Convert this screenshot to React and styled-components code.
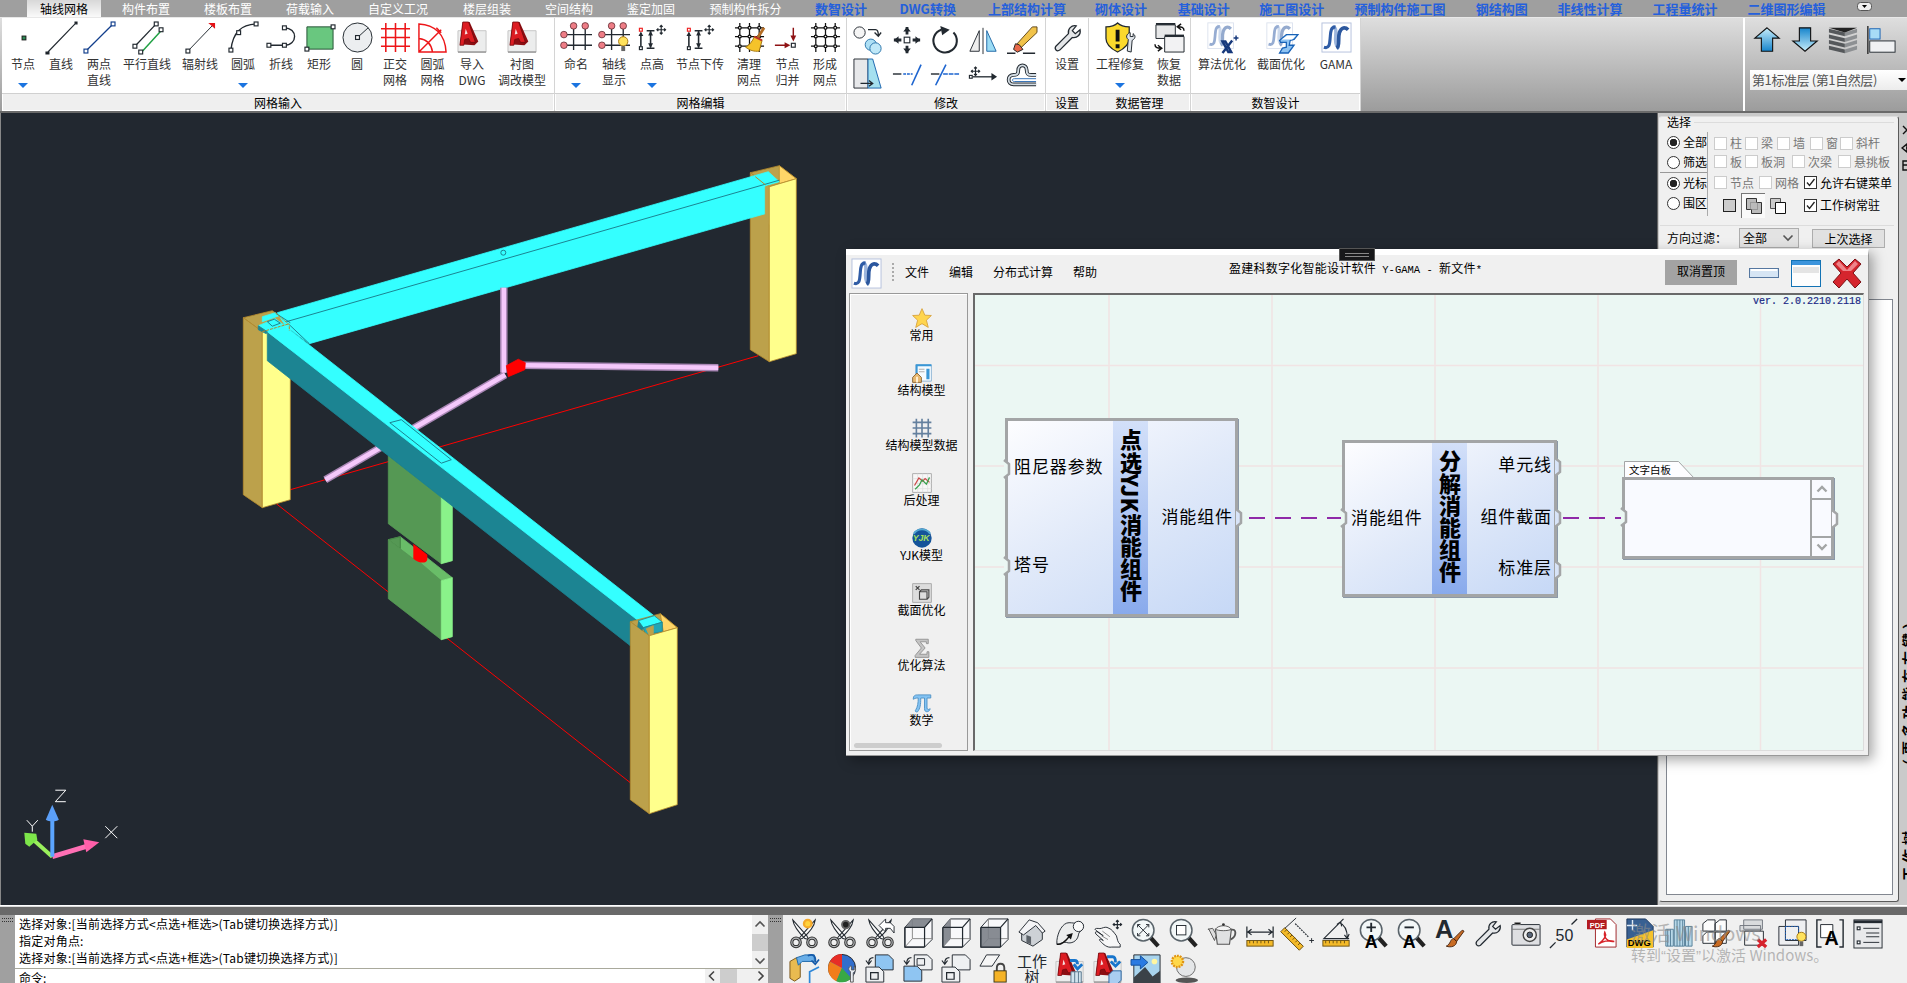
import React from "react";
import styled, { createGlobalStyle } from "styled-components";

const Global = createGlobalStyle`
  * { box-sizing: border-box; }
  body { margin: 0; overflow: hidden; }
  body, text { font-family: "Liberation Sans", "Noto Sans CJK SC", sans-serif; }
`;
const UI = '"Noto Sans CJK SC", sans-serif';

const Screen = styled.div`
  width: 1907px; height: 983px; display: flex; flex-direction: column; position: relative;
  overflow: hidden; background: #f0f0f0; font: 12px/16px ${UI}; color: #000; white-space: nowrap;
`;

/* ---------- tab bar ---------- */
const TabBar = styled.div`height: 17px; background: #9f9f9f; display: flex; padding-left: 23px; flex: none;`;
const TabCell = styled.div`
  width: ${p => p.$w}px; flex: none; display: flex; justify-content: center;
  color: ${p => (p.$blue ? "#2560dc" : "#fff")};
  font-weight: ${p => (p.$blue ? 700 : 400)}; font-size: ${p => (p.$blue ? 13 : 12)}px; line-height: 18px;
`;
const ActiveTab = styled.span`
  width: 74px; height: 17px; text-align: center; color: #000; background: linear-gradient(#d8d8d8, #fafafa);
`;
const tabs = [["轴线网格", 82], ["构件布置", 82], ["楼板布置", 82], ["荷载输入", 82], ["自定义工况", 94], ["楼层组装", 84], ["空间结构", 80], ["鉴定加固", 84], ["预制构件拆分", 105]];
const blueTabs = [["数智设计", 86], ["DWG转换", 87.4], ["上部结构计算", 111.2], ["砌体设计", 76.8], ["基础设计", 88.6], ["施工图设计", 87.4], ["预制构件施工图", 129.2], ["钢结构图", 74.2], ["非线性计算", 102.4], ["工程量统计", 87.6], ["二维图形编辑", 115.8]];

/* ---------- icons ---------- */
const K = "#222930";
const Sq = ({ x, y, c = K, s = 4, f = "#fff" }) => <rect x={x - s / 2} y={y - s / 2} width={s} height={s} fill={f} stroke={c} strokeWidth="1.2" />;
const Logo = ({ o = 1 }) => (
  <g opacity={o}>
    <rect x="1" y="1" width="30" height="30" fill="#fff" stroke="#b5c2dd" />
    <path d="M12 5c5 0 3 8 3 13s1 8 4 9" fill="none" stroke="#9db6dd" strokeWidth="3.500" />
    <path d="M3 26c6 2 6-4 6.500-10S10 5 15 5" fill="none" stroke="#2f5ca6" strokeWidth="3.200" />
    <path d="M16 27c4-2 1-10 3-16s6-6 9-3" fill="none" stroke="#2b579e" strokeWidth="3.800" />
  </g>
);
const Wrench = () => <path d="M4 25L17 12c-1-5 3-9 8-8l-4 5 3 3 5-4c1 5-3 9-8 8L8 29c-3 2-6-1-4-4z" fill="#e4e6e8" stroke={K} strokeWidth="1.300" />;
const Grid = ({ c, w = 1.5 }) => <path d="M6 1v30M16 1v30M26 1v30M1 7h30M1 16h30M1 25h30" stroke={c} strokeWidth={w} fill="none" />;
const Acad = () => (
  <>
    <path d="M1 9h29v22H1z" fill="#eceded" stroke="#c4c4c4" /><path d="M1 31h29" stroke="#777" />
    <path d="M6 0h7l9 20-4 4-15-1z" fill="#8c0d12" />
    <path d="M6 0h6l7 21h-5l-2-4-4 1-1 6H3z" fill="#dc1c22" stroke="#70090d" strokeWidth=".8" />
    <path d="M8 13l3-1-2-5z" fill="#f6dede" />
  </>
);
const Bubbles = () => (<><path d="M13 7v22M25 7v22M3 13h29M3 24h29" stroke={K} strokeWidth="1.400" />{[[13, 4], [25, 4], [3, 13], [3, 24]].map(([x, y]) => <circle key={x + "" + y} cx={x} cy={y} r="3.400" fill="#ee7d86" stroke="#5d2a30" strokeWidth=".8" />)}</>);
const Cross4 = ({ x = 0, y = 0 }) => <path transform={`translate(${x} ${y})`} d="M0-4.500V4.500M-4.500 0H4.500M-1.500-3L0-4.500 1.500-3M-1.500 3L0 4.500 1.500 3M-3-1.500L-4.500 0-3 1.500M3-1.500L4.500 0 3 1.500" stroke={K} strokeWidth="1.200" fill="none" />;
const Heights = () => (<><Sq x={4} y={8} c="#e22" s={3} /><Sq x={4} y={27} s={3} /><path d="M4 11v14M14 9v17M10 9h8M10 27h8" stroke={K} strokeWidth="1.600" /><path d="M4 10l-2.500 4.500h5zM14 9l-2.500 5h5zM14 27l-2.500-5h5z" fill={K} /><Cross4 x={25} y={8} /></>);
const Net = () => <g stroke="#111" strokeWidth="1.300"><path d="M6 1v30M16 1v30M26 1v30M1 6h30M1 15h30M1 25h30" />{[6, 16, 26].map(x => [6, 15, 25].map(y => <circle key={x + "-" + y} cx={x} cy={y} r="1.500" fill="#fff" />))}</g>;
const Scissors = ({ children }) => (
  <>
    <path d="M4 2l15 17 2 4-4-1C11 16 5 9 4 2zM28 2L13 19l-3 4 4-1C20 17 27 10 28 2z" fill="#fcfcfc" stroke={K} strokeWidth="1.100" />
    <circle cx="7.500" cy="26" r="4.500" fill="none" stroke="#333" strokeWidth="3.400" /><circle cx="24.500" cy="26" r="4.500" fill="none" stroke="#333" strokeWidth="3.400" />
    <circle cx="7.500" cy="26" r="4.500" fill="none" stroke="#b9bcbf" strokeWidth="1.200" /><circle cx="24.500" cy="26" r="4.500" fill="none" stroke="#b9bcbf" strokeWidth="1.200" />
    {children}
  </>
);
const Cube = ({ face }) => (<><path d="M2 10L10 1h21v22l-8 8H2z" fill="#f8f8fa" stroke={K} /><path d="M10 1v21L2 31M10 22h21" stroke="#888" fill="none" /><path d={face} fill="#7b8087" opacity=".9" /><path d="M2 10h21v21M23 10l8-9M2 10v21h21" stroke={K} strokeWidth="1.300" fill="none" /></>);
const Lens = () => (<><path d="M20 20l9 10" stroke="#222" strokeWidth="4.500" /><circle cx="13" cy="13" r="11.500" fill="#f2f7f8" stroke="#59636a" strokeWidth="1.600" /></>);
const House = () => (<><path d="M5 15v9l12 6 10-7V12L18 4z" fill="#cdd1d6" stroke={K} /><path d="M2 15L13 2l9 3 8 9-3 2-7-8L7 18z" fill="#f4f4f6" stroke={K} /><path d="M10 26v-8l5 2v8z" fill="#5c6269" /></>);
const Sheet = ({ x, y, f }) => <path d={`M${x} ${y}h14l5 5v11h-19z`} fill={f} stroke={K} />;
const Ruler = () => (<><rect x="2" y="24" width="28" height="6" fill="#f4ba28" stroke="#6d5212" /><path d="M5 24v3M9 24v3M13 24v3M17 24v3M21 24v3M25 24v3" stroke="#6d5212" /></>);
const Brush = () => <path d="M29 13L20 22l3 3 8-11zM20 22c-4 0-3 6-8 8 5 2 11 0 11-5z" fill="#c96c24" stroke="#4a2510" />;
const Lock = () => (<><path d="M19 20v-4c0-6 8-6 8 0v4" fill="none" stroke="#444" strokeWidth="2" /><rect x="16" y="19" width="13" height="12" fill="#f5b325" stroke="#3d3216" /></>);
const Bulb = ({ x = 24, y = 20 }) => (<><circle cx={x} cy={y} r="4.800" fill="#ffe25c" stroke="#a87712" /><path d={`M${x - 2} ${y + 5}h4v5h-4z`} fill="#666" /></>);

const ICONS = {
  dot: <><rect x="14" y="14" width="5" height="5" fill="#1d1d1d" /><rect x="15" y="15" width="3" height="3" fill="#2f8a55" /></>,
  line: <path d="M1 32L31 1M0 31h3v2H0zM30 0h2v2h-2z" stroke={K} strokeWidth="1.200" />,
  line2: <><path d="M2 30L30 2" stroke="#123e8c" strokeWidth="1.300" /><Sq x={2} y={30} c="#123e8c" /><Sq x={30} y={2} c="#123e8c" /></>,
  para: <><path d="M3 25L25 2" stroke={K} strokeWidth="1.300" /><path d="M10 31L31 8" stroke="#1fa043" strokeWidth="1.500" /><Sq x={3} y={25} /><Sq x={25} y={2} /><Sq x={9} y={31} /><Sq x={30} y={8} /></>,
  ray: <><path d="M3 30L28 4" stroke={K} /><path d="M24 1h7v6z" fill="#e31317" /><Sq x={3} y={30} /></>,
  arc: <><path d="M3 29C5 10 14 3 29 2" fill="none" stroke={K} strokeWidth="1.400" /><Sq x={3} y={29} /><Sq x={11} y={11} /><Sq x={29} y={2} /></>,
  poly: <><path d="M3 24h16c14 0 14-18 0-18" fill="none" stroke={K} strokeWidth="1.400" /><Sq x={3} y={24} /><Sq x={19} y={24} /><Sq x={19} y={6} /></>,
  rect: <><path d="M3 5h27v23H3z" fill="#69c77f" stroke="#245335" /><Sq x={3} y={28} /><Sq x={30} y={5} /></>,
  circle: <><circle cx="16" cy="16" r="15" fill="#eceef0" stroke={K} /><path d="M16 16L27 6" stroke={K} /><Sq x={16} y={16} /></>,
  ortho: <Grid c="#ed1518" w={1.600} />,
  fan: <path d="M2 2v29h28C29 12 18 3 2 2zM2 17c8 1 13 6 14 14M2 31L25 8M20 6l5 5" fill="none" stroke="#ed1518" strokeWidth="1.500" />,
  acad: <Acad />,
  bubbles: <Bubbles />,
  bubbleBulb: <><Bubbles /><Bulb x={25} /></>,
  heights: <Heights />,
  broom: <><Net /><path d="M31 6L24 17" stroke="#b36c24" strokeWidth="3" /><path d="M21 15l8 4-3 11c-5 1-10-1-14-4 4-2 7-6 9-11z" fill="#f5c32a" stroke="#a77913" /><path d="M21 15l8 4" stroke="#bc3226" strokeWidth="2" /></>,
  merge: <><path d="M22 6v11M3 24h12" stroke="#8f1214" strokeWidth="1.500" /><path d="M19 14h6l-3 6zM13 21v6l6-3z" fill="#8f1214" /><Sq x={22} y={24} /></>,
  net: <Net />,
  copy: <><circle cx="7" cy="8" r="6" fill="#f5f5f5" stroke={K} /><path d="M16 5h8c3 0 3 3 3 6M23 8l4 4 3-4" fill="none" stroke={K} strokeWidth="1.400" /><circle cx="19" cy="21" r="6" fill="#aee0f5" stroke="#2872a9" /><circle cx="24" cy="25" r="6" fill="#bfe8f8" stroke="#2872a9" /></>,
  move: <><path d="M16 2v8M16 22v8M2 16h8M22 16h8" stroke={K} strokeWidth="3" /><path d="M12 7l4-5 4 5zM12 25l4 5 4-5zM7 12l-5 4 5 4zM25 12l5 4-5 4z" fill={K} /><Sq x={16} y={16} s={6} /></>,
  rotate: <><path d="M12 5A12.500 12.500 0 1 0 25 8" fill="none" stroke={K} strokeWidth="2.200" /><path d="M11 1l10 4-8 6z" fill={K} /></>,
  mirror: <><path d="M12 6v22H2z" fill="#eee" stroke={K} /><path d="M20 6v22h10z" fill="#9bdcf5" stroke="#1c64a3" /><path d="M16 3v28" stroke={K} /></>,
  erase: <><path d="M9 22L27 2l5 0v6L13 26z" fill="#f1c34a" stroke="#5c4315" /><path d="M9 20l-2 6 4 3 6-3-4-5z" fill="#e8694a" stroke="#222" /><path d="M0 30h9M17 30h13" stroke={K} strokeWidth="1.600" /></>,
  stretch: <><path d="M1 0h15v31H1z" fill="#e7e8ea" stroke={K} /><path d="M16 0h5l9 31H16z" fill="#a5e0ef" stroke="#1862ad" /><path d="M8 26h12M17 23l4 3-4 3" stroke={K} strokeWidth="1.400" fill="none" /></>,
  trim: <><path d="M1 16h9" stroke={K} strokeWidth="1.500" /><path d="M12 16h10" stroke="#1c64cf" strokeWidth="1.500" strokeDasharray="3 1" /><path d="M21 28L31 6" stroke="#1c64cf" strokeWidth="1.700" /></>,
  extend: <><path d="M1 16h9" stroke={K} strokeWidth="1.500" /><path d="M6 28L17 6" stroke="#1c64cf" strokeWidth="1.700" /><path d="M14 16h17" stroke="#1c64cf" strokeWidth="1.500" strokeDasharray="5 1" /></>,
  align: <><path d="M5 19h24" stroke={K} strokeWidth="1.400" /><path d="M25 15l6 4-6 4z" fill={K} /><Sq x={3} y={19} s={3} /><Cross4 x={8} y={13} /></>,
  offset: <><path d="M31 17h-5c-4 0-5-1-5-5 0-7-9-7-9 0 0 4-1 5-5 5-7 0-7 10 0 10h24" fill="none" stroke={K} strokeWidth="4" /><path d="M31 17h-5c-4 0-5-1-5-5 0-7-9-7-9 0 0 4-1 5-5 5-7 0-7 10 0 10h24" fill="none" stroke="#d4dde4" strokeWidth="2" /><path d="M31 21H8c-3 0-3 3 0 3h23" fill="none" stroke="#2e6db3" /></>,
  wrench: <Wrench />,
  shield: <><path d="M13 1c4 4 8 4 12 4v12c0 7-6 11-12 14C7 28 1 24 1 17V5c4 0 8 0 12-4z" fill="#fbd92c" stroke={K} strokeWidth="1.300" /><path d="M13 8v12M13 23v4" stroke="#111" strokeWidth="4" /><path d="M23 30l1-12c-4-3 0-7 2-7v4h3v-3c4 3 1 6-1 7l-1 12z" fill="#dfe4ea" stroke={K} /></>,
  restore: <><path d="M2 3h20v14H2z" fill="#e7e8e9" stroke={K} /><path d="M2 2h20" stroke={K} strokeWidth="2" /><path d="M11 15h20v16H11z" fill="#f2f2f3" stroke={K} /><path d="M11 14h20" stroke={K} strokeWidth="2" /><path d="M31 9c0-4-3-4-6-4M28 2l-4 3 4 3M1 23c0 4 3 4 6 4M4 24l4 3-4 3" fill="none" stroke="#111" strokeWidth="1.500" /></>,
  algo: <><g transform="scale(.88)"><Logo o={0.500} /></g><path d="M16 20h3l6 11h-3zM26 19l-10 13" stroke="#16387b" strokeWidth="2.500" fill="none" /><path d="M30 14v5M27.500 16.500h5" stroke="#16387b" strokeWidth="1.500" /></>,
  section: <><g transform="scale(.88)"><Logo o={0.500} /></g><path d="M14 19l7-6h12l-4 5-4 1-1 5h5l-6 8H14l3-5 4-1v-5h-6z" fill="#8ec3f2" stroke="#1862b7" strokeWidth="1.300" /><path d="M16 18l6-4h9l-4 4z" fill="#fff" /></>,
  logo: <Logo />,
  up: <path d="M16 3L29 14h-7v14H10V14H3z" fill="url(#gUp)" stroke="#111" strokeWidth="1.200" />,
  down: <path d="M16 28L29 17h-7V3H10v14H3z" fill="url(#gDown)" stroke="#111" strokeWidth="1.200" />,
  layers: <>{[0, 6, 12, 18].map(v => <g key={v}><path d={`M1 ${4 + v}l17 4v4l-17-4z`} fill="#55585b" /><path d={`M18 ${8 + v}l13-4v4l-13 4z`} fill="#8d9093" /></g>)}<path d="M1 3h30l-13 5z" fill="#222" /></>,
  frames: <><path d="M2 1v30" stroke="#111" strokeWidth="1.300" /><rect x="4" y="4" width="11" height="11" fill="#a8dcf6" stroke="#1762b3" /><rect x="4" y="17" width="27" height="12" fill="#f0f1f3" stroke={K} /></>,
  cutSun: <Scissors><circle cx="20" cy="6" r="4" fill="#ffd33d" stroke="#f5aa2a" strokeWidth="2.500" /></Scissors>,
  cutDot: <Scissors><circle cx="20" cy="7" r="4" fill="#222" stroke="#666" strokeWidth="2" /></Scissors>,
  cutBack: <Scissors><path d="M15 8l7-7v4h5l4 4v7l-4-5h-5v4z" fill="#fff" stroke={K} /></Scissors>,
  cubeTop: <Cube face="M2 10L10 1h21l-8 9z" />,
  cubeLeft: <Cube face="M2 10L10 1v21L2 31z" />,
  cubeFront: <Cube face="M2 10h21v21H2z" />,
  house: <House />,
  orbit: <><path d="M2 24c1-9 6-19 13-19 4 0 6 1 8 0 6-3 9 3 6 7-1 2-4 3-4 6-1 7-8 10-13 8-4-1-6 2-10 2z" fill="#eceded" stroke={K} /><circle cx="25" cy="9" r="5.500" fill="#fafafa" stroke={K} /><path d="M2 28c4 1 9-3 13-8" fill="none" stroke="#111" strokeWidth="1.400" /><path d="M12 18l7-2-2 7z" fill="#111" /></>,
  hand: <><path d="M2 12c2-2 5 0 7-1 3-1 5-2 8 0 3 1 5 4 8 8 1 3 1 7 4 9v3h-9c-5 1-9-3-12-6-2-2-1-3 1-2l2 1-8-7c-1-2 0-3 2-2l6 4-8-6c-1-1-1-1-1-1z" fill="#f7f7f7" stroke={K} /><path d="M10 14l8 6M9 19l7 4" stroke="#888" /><Cross4 x={26} y={7} /></>,
  zoomAll: <><Lens /><path d="M7 7l12 12M19 7L7 19M7 10V7h3M16 7h3v3M19 16v3h-3M10 19H7v-3" stroke={K} fill="none" /></>,
  zoomWin: <><Lens /><rect x="8" y="8" width="10" height="10" fill="#fff" stroke={K} /></>,
  teapot: <><path d="M25 13c7-3 7 7 0 10" fill="none" stroke="#555" strokeWidth="2" /><path d="M8 24L2 12H1l5-1 4 7z" fill="#ddd" stroke="#555" /><path d="M9 12h17l-2 16H11z" fill="#e0e1e2" stroke="#555" strokeWidth="1.200" /><path d="M9 12c3-5 14-5 17 0-3 2-14 2-17 0z" fill="#f4f4f4" stroke="#555" /><circle cx="17.500" cy="7" r="1.500" fill="#333" /></>,
  dist: <><Ruler /><path d="M2 9v12M30 9v12M3 15h26M7 12l-4 3 4 3M25 12l4 3-4 3" fill="none" stroke={K} strokeWidth="1.300" /></>,
  distDiag: <><g transform="rotate(45 16 16) translate(0 -2)"><Ruler /></g><path d="M2 11L14 0M28 24h5M30.500 21.500v5" stroke={K} /><path d="M13 6l14 14" stroke={K} strokeWidth="1.300" strokeDasharray="2 1" /></>,
  angle: <><path d="M30 22H3L24 1M20 5c7 3 8 10 8 16M17 7l4-3 1 5M25 18l3 4 2-5" fill="none" stroke={K} strokeWidth="1.200" /><Ruler /></>,
  zoomInA: <><Lens /><path d="M13 5v10M8 10h10" stroke={K} strokeWidth="2" /><text x="6" y="32" fontSize="19" fontWeight="700">A</text></>,
  zoomOutA: <><Lens /><path d="M8 10h10" stroke={K} strokeWidth="2" /><text x="6" y="32" fontSize="19" fontWeight="700">A</text></>,
  styleA: <><text x="0" y="21" fontSize="27" fontWeight="700" fill={K}>A</text><Brush /></>,
  camera: <><rect x="1" y="7" width="30" height="22" rx="1" fill="#dedfe2" stroke={K} /><path d="M1 12h30M4 5h6v2H4z" stroke="#777" /><circle cx="20" cy="18" r="7" fill="#eee" stroke="#444" strokeWidth="1.500" /><circle cx="20" cy="18" r="3" fill="#59677b" stroke="#222" /></>,
  fifty: <><text x="7" y="24" fontSize="17" fill={K}>50</text><path d="M1 32l6-6M24 7l6-6" stroke={K} strokeWidth="1.400" /></>,
  pdf: <><path d="M9 1h16l6 6v24H9z" fill="#fff" stroke="#9e2125" /><path d="M0 2h21v10H0z" fill="#b31b20" /><text x="3" y="10.500" fontSize="8" fontWeight="700" fill="#fff">PDF</text><path d="M12 28c8-6 9-10 7-13-2 6 4 11 10 10-6-2-13 0-17 3z" fill="none" stroke="#d8242a" strokeWidth="1.500" /></>,
  dwg: <><path d="M2 1h20l8 8v22H2z" fill="#386092" stroke="#1a3459" /><path d="M2 23L30 13v19H2z" fill="#f5c12b" /><path d="M8 2v11M2 8h11" stroke="#dfeaf7" strokeWidth="1.500" /><text x="3" y="30" fontSize="10" fontWeight="700">DWG</text></>,
  tower: <path d="M3 12h8v18H3zM12 2h11v28H12zM24 9h7v21h-7zM5 12v18M8 12v18M15 2v28M18 2v28M21 2v28M27 9v21" fill="#b8d8e8" stroke="#547f99" />,
  books: <><path d="M2 6l5-4h8v12H2zM15 6l5-4h7v12H15zM2 19l4-4h9v12H2zM15 15h12v12H15z" fill="#fcfcfc" stroke={K} /><Brush /></>,
  winClose: <><path d="M5 2h20v10H5zM1 8h22v6H1z" fill="#d9dbdd" stroke="#737780" /><path d="M6 14h20v15H6z" fill="#f4f4f4" stroke={K} /><path d="M20 23l9 8M29 23l-9 8" stroke="#d7222c" strokeWidth="3.500" /></>,
  lightWin: <><path d="M9 2h22v22H9zM2 9h21v20H2z" fill="#eeeff1" stroke={K} /><path d="M9 9h14v14H9z" fill="none" stroke="#1f60ba" strokeDasharray="2 1" /><Bulb x={26} /></>,
  bracketA: <><path d="M7 2H2v29h5M26 2h4v29h-4" fill="none" stroke={K} strokeWidth="1.500" /><path d="M6 7h13v14H6z" fill="#fff" stroke={K} /><text x="10" y="29" fontSize="21" fontWeight="700">A</text></>,
  list: <><rect x="1" y="2" width="30" height="30" fill="#e8e9eb" stroke={K} /><path d="M1 4h30" stroke={K} strokeWidth="3" /><path d="M11 11h17M14 16h14M14 20h14M11 26h17" stroke={K} /><Sq x={6} y={11} s={3} /><Sq x={6} y={26} s={3} /></>,
  beam: <><path d="M1 9l7-4 4 3v18l-6 4-5-3z" fill="#e9bb50" stroke="#78541a" /><path d="M8 5l9-3h10v7H14l-4 4z" fill="#69aee8" stroke="#1b65a7" /><path d="M20 3c6-3 9 1 8 7M24 8l4 4 4-5" stroke="#155aa9" strokeWidth="1.800" fill="none" /><path d="M22 32V20l10-5" stroke="#2e87d8" strokeWidth="1.800" fill="none" /></>,
  wheel: <><circle cx="16" cy="16" r="14.500" fill="#326ecc" stroke="#222" /><path d="M16 16V1A15 15 0 0 0 3 9z" fill="#e72d26" /><path d="M16 16L3 9a15 15 0 0 0 7 21z" fill="#f17d1b" /><path d="M16 16l-6 14a15 15 0 0 0 16-3z" fill="#38a845" /><path d="M25 31V20c-4-3 0-7 1-6v4h3v-4c3 3 1 6-1 7v10z" fill="#e9eef4" stroke="#555" /></>,
  sheets1: <><Sheet x={11} y={2} f="#8fc5f2" /><Sheet x={1} y={15} f="#eef0f2" /><path d="M9 5c-4 0-5 3-5 6M1 8l3 4 3-4M6 21h8v7H6z" fill="none" stroke={K} strokeWidth="1.300" /></>,
  sheets2: <><Sheet x={12} y={2} f="#eef0f2" /><path d="M15 6h8v7h-8z" fill="none" stroke={K} /><Sheet x={1} y={14} f="#8fc5f2" /><path d="M9 5c-4 0-5 3-5 6M1 8l3 4 3-4" fill="none" stroke={K} strokeWidth="1.300" /></>,
  sheets3: <><Sheet x={12} y={2} f="#eef0f2" /><Sheet x={1} y={15} f="#eef0f2" /><path d="M9 5c-4 0-5 3-5 6M1 8l3 4 3-4M6 21h8v7H6z" fill="none" stroke={K} strokeWidth="1.300" /></>,
  planeLock: <><path d="M8 2h14L14 14H1z" fill="#f6f6f6" stroke={K} /><Lock /></>,
  acadTower: <><Acad /><path d="M16 8h5c3 0 3 2 3 4M20 12l4 5 5-5" stroke="#1775cc" strokeWidth="3" fill="none" /><path d="M17 20h11v12H17zM21 20v12M25 20v12" fill="#d2e4ee" stroke="#55758b" /></>,
  acadCube: <><Acad /><path d="M15 4h6c3 0 3 3 3 6M19 9l5 5 5-5" stroke="#1775cc" strokeWidth="3" fill="none" /><path d="M17 23l4-4h9v10l-4 4h-9z" fill="#a9cdf1" stroke="#29649f" /></>,
  photo: <><path d="M3 2h28v30H3z" fill="#a8d4ee" stroke={K} /><path d="M3 26l12-11 8 10 8-6v13H3z" fill="#3b4248" /><circle cx="25" cy="9" r="3" fill="#fff6a0" /><path d="M0 7h10V3l8 7-8 7v-4H0z" fill="#2a7be2" stroke="#134f9b" /></>,
  sunBall: <><circle cx="18" cy="15" r="10" fill="#e4e6e8" stroke="#666" /><circle cx="9" cy="9" r="6" fill="#ffd84a" stroke="#e09312" strokeWidth="2.500" strokeDasharray="2 1" /><ellipse cx="19" cy="29" rx="12" ry="3" fill="#555" /></>,
  star: <path d="M16 1l4.500 10.500L31 12l-8 7.500L26 31l-10-6-10 6 3-11.500L1 12l10.500-.5z" fill="#ffd54f" stroke="#d9a441" strokeWidth="1.500" />,
  struct: <><path d="M6 3h25v26H6z" fill="#f5fbff" stroke="#8fb5d3" strokeWidth="1.500" /><path d="M6 2h25v3H6zM6 5h3v12H6zM23 9h5v17h-5z" fill="#3a97d6" /><path d="M11 10h9M11 14h9" stroke="#aaa" strokeWidth="1.500" /><path d="M1 31V23l7-7 7 7v8z" fill="#e8b971" stroke="#8a6536" strokeWidth="1.500" /><path d="M8 22v9" stroke="#fff2d8" strokeWidth="3" /></>,
  dataGrid: <path d="M7 1v30M16 1v30M26 1v30M1 7h30M1 16h30M1 25h30" stroke="#64809e" strokeWidth="2.600" />,
  chart: <><path d="M1 1h30v30H1z" fill="#f7f7f7" stroke="#aaa" strokeWidth="1.500" /><path d="M1 9h30M1 17h30M1 25h30M9 1v30M17 1v30M25 1v30" stroke="#ddd" /><path d="M4 20l7-12 6 5 4-4 7 6" stroke="#cb4848" strokeWidth="2" fill="none" /><path d="M5 26l7-7 4-8 7 7 5-11" stroke="#3aa04e" strokeWidth="2" fill="none" /></>,
  yjk: <><circle cx="16" cy="16" r="15.500" fill="#15549a" /><path d="M3 9c6-9 20-9 26 0" stroke="#53a7d1" strokeWidth="3" fill="none" /><text x="1" y="21" fontSize="14" fontWeight="700" fontStyle="italic" fill="#a5e05d">YJK</text></>,
  sectOpt: <><path d="M1 1h30v30H1z" fill="#ddd" stroke="#aaa" strokeWidth="1.500" /><path d="M12 14h12v12H12zM12 14l3-3h12v12l-3 3" fill="none" stroke="#444" strokeWidth="1.800" /><path d="M6 5l6 6M12 5l-6 6" stroke="#444" strokeWidth="2" /></>,
  sigma: <path d="M6 2h20v7h-3V6H13l8 10-9 10h12v-4h3v9H5v-3l10-12L6 4z" fill="#c4c4c4" stroke="#949494" strokeWidth="1.500" />,
  pi: <path d="M2 10c0-6 3-7 7-7h21v5h-6v16c0 3 3 3 5 1 0 5-9 8-9 0V8h-6c0 11-1 17-5 22-3 1-5-1-3-3 3-5 4-11 4-19-4 0-6 1-8 2z" fill="#83c3f3" stroke="#4f92c5" strokeWidth="1.500" />,
};
const IconSvg = styled.svg`display: block; flex: none; overflow: visible;`;
const Icon = ({ name, size = 32 }) => <IconSvg width={size} height={size} viewBox="0 0 32 32">{ICONS[name]}</IconSvg>;

/* ---------- ribbon ---------- */
const Ribbon = styled.div`
  height: 96px; flex: none; display: flex; padding-left: 2px; border-top: 1px solid #e8e8e8; border-bottom: 2px solid #6a6a6a;
  background: linear-gradient(#dedede, #9c9c9c);
`;
const Group = styled.div`width: ${p => p.$w}px; flex: none; display: flex; flex-direction: column; background: #fff; border-right: 1px solid #d4d4d4;`;
const GroupBody = styled.div`height: 76px; flex: none; display: flex; padding: 4px 0 0 2px; border-bottom: 1px solid #d0d0d0;`;
const GroupLabel = styled.div`height: 17px; flex: none; background: #efefef; text-align: center; line-height: 18px; border: 1px solid #fff; border-top: 0;`;
const Tool = styled.div`
  width: ${p => p.$w}px; flex: none; display: flex; flex-direction: column; align-items: center; color: #333;
  span { line-height: 16px; text-align: center; white-space: pre; margin-top: 3px; }
`;
const Caret = styled.i`border: 5px solid transparent; border-top-color: #1b74e0; border-bottom: 0; margin-top: 11px;`;
const ToolGrid = styled.div`display: grid; grid-template-columns: repeat(5, 38.4px); grid-template-rows: 34px 34px; justify-items: center; align-items: center; padding-top: 1px;`;
const Filler = styled.div`flex: 1; border-right: 2px solid #fff;`;
const FloorBox = styled.div`width: 162px; padding: 7px 0 0 5px; display: flex; flex-direction: column; justify-content: space-between;`;
const FloorIcons = styled.div`display: flex; gap: 8px; padding-left: 2px;`;
const FloorSelect = styled.div`
  height: 20px; margin-bottom: 21px; padding: 0 1px 0 2px; display: flex; align-items: center; justify-content: space-between;
  background: linear-gradient(#fff, #ececec); color: #555; font-size: 13px; letter-spacing: -.4px;
`;
const BlackCaret = styled.i`border: 4px solid transparent; border-top-color: #000; border-bottom: 0;`;

const g1 = [["dot", "节点", 38, 1], ["line", "直线", 38], ["line2", "两点\n直线", 38], ["para", "平行直线", 58], ["ray", "辐射线", 48], ["arc", "圆弧", 38, 1], ["poly", "折线", 38], ["rect", "矩形", 38], ["circle", "圆", 38], ["ortho", "正交\n网格", 38], ["fan", "圆弧\n网格", 37], ["acad", "导入\nDWG", 42], ["acad", "衬图\n调改模型", 58]];
const g2 = [["bubbles", "命名", 38, 1], ["bubbleBulb", "轴线\n显示", 38], ["heights", "点高", 38, 1], ["heights", "节点下传", 58], ["broom", "清理\n网点", 40], ["merge", "节点\n归并", 37], ["net", "形成\n网点", 38]];
const g3 = ["copy", "move", "rotate", "mirror", "erase", "stretch", "trim", "extend", "align", "offset"];
const groups = [[553, "网格输入", g1], [292, "网格编辑", g2], [199, "修改", null], [43, "设置", [["wrench", "设置", 38]]], [102, "数据管理", [["shield", "工程修复", 58, 1], ["restore", "恢复\n数据", 40]]], [170, "数智设计", [["algo", "算法优化", 58], ["section", "截面优化", 60], ["logo", "GAMA", 50]]]];

/* ---------- main area ---------- */
const Main = styled.div`height: 793px; flex: none; display: flex; background: #222830; border-bottom: 1px solid #fff;`;
const Scene = styled.svg`width: 1657px; height: 792px; flex: none; border-left: 1px solid #888; display: block;`;
const SidePanel = styled.div`flex: 1; display: flex; background: #cacaca; padding: 3px 0 3px 1px; border-left: 1px solid #666;`;
const Dock = styled.div`
  width: 240px; flex: none; background: #f0f0f0; border: 1px solid #5a5a5a; border-left-color: #eee; border-top-color: #ddd; border-radius: 3px;
  display: flex; flex-direction: column;
`;
const DockStrip = styled.div`flex: 1; overflow: hidden; display: flex; flex-direction: column; align-items: flex-start; padding: 5px 0 0 2px;`;
const VText = styled.div`
  writing-mode: vertical-rl; text-orientation: sideways; transform: rotate(180deg); font-weight: 700; font-size: 14px; letter-spacing: 4px; line-height: 14px;
  margin-top: ${p => p.$mt}px;
`;
const Fieldset = styled.div`height: 109px; border-bottom: 1px solid #dcdcdc; margin-right: 4px; display: flex; flex-direction: column;`;
const Legend = styled.div`
  display: flex; align-items: center; height: 13px; padding-left: 7px; gap: 3px; line-height: 10px; padding-bottom: 3px;
  &::after { content: ""; flex: 1; height: 1px; background: #dcdcdc; }
`;
const Cols = styled.div`display: flex; margin-top: 2px;`;
const RadioCol = styled.div`width: 51px; border-right: 1px solid #aaa; height: 84px;`;
const RadioRow = styled.div`
  height: ${p => (p.$line ? 21 : 20)}px; display: flex; align-items: center; gap: 3px; padding-left: 7px;
  border-bottom: ${p => (p.$line ? "1px solid #999" : "0")};
`;
const RadioDot = styled.i`
  width: 13px; height: 13px; border: 1px solid #333; border-radius: 50%; background: ${p => (p.$on ? "radial-gradient(#222 0 3.500px, #fff 4px)" : "#fff")};
`;
const CheckCol = styled.div`flex: 1; padding: 2px 0 0 6px;`;
const CheckRow = styled.div`height: ${p => p.$h}px; display: flex; align-items: center;`;
const CheckItem = styled.div`
  width: ${p => p.$w}px; display: flex; align-items: center; gap: 3px; color: ${p => (p.$on ? "#000" : "#777")};
  i { width: 13px; height: 13px; flex: none; background: #fff; border: 1px solid ${p => (p.$on ? "#333" : "#ccc")}; }
  svg { display: block; }
`;
const Modes = styled.div`display: flex; width: 90px; flex: none; padding-left: 3px;`;
const Mode = styled.div`
  width: 24px; height: 25px; display: grid; place-items: center;
  background: ${p => (p.$on ? "#fafafa" : "none")}; border: solid ${p => (p.$on ? "#777" : "transparent")}; border-width: 1px 0 0 1px;
`;
const FilterRow = styled.div`display: flex; align-items: center; height: 20px; margin: 2px 0 0 7px;`;
const DropBox = styled.div`width: 60px; height: 20px; margin-left: 12px; background: #e3e3e3; border: 1px solid #adadad; display: flex; align-items: center; justify-content: space-between; padding: 0 4px 0 3px;`;
const PushBtn = styled.div`width: 73px; height: 19px; margin-left: 13px; background: #e1e1e1; border: 1px solid #adadad; text-align: center; line-height: 17px;`;
const ListBox = styled.div`flex: 1; margin: 51px 5px 6px 6px; background: #fff; border: 1px solid #828790;`;

const checks = [[18, [["柱", 31], ["梁", 32], ["墙", 33], ["窗", 30], ["斜杆", 50]]], [19, [["板", 31], ["板洞", 47], ["次梁", 46], ["悬挑板", 52]]], [23, [["节点", 45], ["网格", 45], ["允许右键菜单", 90, 1]]]];
const Check = ({ t, w, on }) => <CheckItem $w={w} $on={on}><i>{on ? <svg width="11" height="11"><path d="M2 5.500l2.500 3L9.500 2" fill="none" stroke="#222" strokeWidth="1.300" /></svg> : null}</i>{t}</CheckItem>;
const Radio = ({ t, on, line }) => <RadioRow $line={line}><RadioDot $on={on} />{t}</RadioRow>;
const Chevron = ({ d, c = "#555", w = 1.6 }) => <svg width="12" height="8"><path d={d} fill="none" stroke={c} strokeWidth={w} /></svg>;
const UP = "M1.500 6.500L6 2l4.500 4.500", DOWN = "M1.500 1.500L6 6l4.500-4.500";

const P = ({ p, f, s = f }) => <polygon points={p} fill={f} stroke={s} strokeWidth=".8" />;
const C = "#34ffff", D = "#1c8492", T = "#bca14b", Y = "#ffff8c", R = "#f00", B = "#b58a2c";
const Tube = ({ d }) => <><path d={d} stroke="#a987b5" strokeWidth="7.500" /><path d={d} stroke="#f5c8fb" strokeWidth="4.500" /></>;
const Model = () => (
  <Scene viewBox="0.7 113.3 1656 792">
    <path d="M290 490L758 356M276 504L630 783" stroke={R} fill="none" />
    <P p="750,173 779,166 796,179 769,187" f={T} s={B} />
    <P p="779,166 796,179 779,184" f="#ffd668" s={B} />
    <P p="750,173 769,187 769,362 750,350" f={T} s={B} />
    <P p="243,318 272,311 290,324 262,332" f={T} s={B} />
    <P p="243,318 262,332 262,508 243,495" f={T} s={B} />
    <P p="262,332 290,324 290,500 262,508" f={Y} s={B} />
    <P p="277,313 768,172 779,182 765,186 765,214 309,344 285,326" f={C} />
    <path d="M286 322L779 180.500" stroke={D} />
    <path d="M755 177l10 8" stroke={B} />
    <P p="765,187 769,187 769,225 765,214" f={T} />
    <P p="769,187 796,179 796,354 769,362" f={Y} s={B} />
    <circle cx="503" cy="253" r="2.500" fill="none" stroke={D} />
    <Tube d="M325 480L505 375" />
    <Tube d="M503.500 288V373" />
    <Tube d="M522 365.500L718 368" />
    <P p="506,366 518,359.500 525,363 524.500,370 508,377" f={R} />
    <P p="388,456 441,497 441,564 388,524" f="#559854" />
    <P p="441,497 452,506 452,561 441,564" f="#8af28a" />
    <P p="388,540 400,537 452,578 441,581" f="#69bd68" />
    <P p="388,540 400,537 400,549" f="#559854" s="#3e7c3e" />
    <P p="388,540 413,559 420,563 441,581 441,640 388,599" f="#559854" />
    <P p="441,581 452,578 452,637 441,640" f="#8af28a" />
    <path d="M413 544l14 11v5c-1 4-8 4-14-1z" fill={R} />
    <P p="267,332 638,621 630,646 267,361" f={D} />
    <P p="258,326 275,319 285,326.500 653,615.500 638,621 267,332" f={C} />
    <P p="258,326 267,332 266,334 258,330" f={D} />
    <P p="262,317 275,313 279,316 262,322" f={C} />
    <path d="M267 322l7-2.500 6 4-8 3zM276 314l14 9M289 325l20 19M389.500 423l11.500-3 50 40-10 3.500z" fill="none" stroke={D} />
    <path d="M275 313l14 12v6M262 332l27-8" fill="none" stroke={B} strokeDasharray="3 1" />
    <P p="630,622 660,614 677,628 649,636" f={T} s={B} />
    <P p="660,614 677,628 663,632" f="#ffd668" s={B} />
    <P p="638,621 654,616 662,622.500 643,628" f={C} s={D} />
    <P p="643,628 662,622.500 662,632 645,635" f="#22a5b5" s={D} />
    <P p="646,629 653,626 653,634 649,636" f={T} />
    <P p="630,622 649,636 649,814 630,800" f={T} s={B} />
    <P p="649,636 677,628 677,805 649,814" f={Y} s={B} />
    <path d="M638 621l5 7-1 3-5-4z" fill={D} />
    <path d="M52 857L92 845" stroke="#ff6fb4" strokeWidth="5" /><path d="M83 839.500l16 3-13 10z" fill="#ff5fa9" />
    <path d="M52 857L33 840" stroke="#9af05c" strokeWidth="4" /><path d="M24 833l12 1 1 6-8 7-4-3z" fill="#7de64a" />
    <path d="M52 857V815" stroke="#5ba5ff" strokeWidth="4" /><path d="M52 805l6.500 15c-3 2-10 2-13 0z" fill="#5b9ff8" />
    <path d="M55 790.500h10.500L55 802h10.500M105 826.500l12 12M117 826.500l-12 12M26.500 820.500l5.500 6 5.500-6M32 826.500v5.500" fill="none" stroke="#fff" />
  </Scene>
);

/* ---------- GAMA window ---------- */
const Win = styled.div`
  position: absolute; left: 846px; top: 249px; width: 1023px; height: 507px; background: #f0f0f0; border-top: 6px solid #fff;
  border-right: 1px solid #999; border-bottom: 1px solid #999; box-shadow: 4px 4px 12px rgba(0,0,0,.35);
  display: flex; flex-direction: column; padding: 0 4px 4px 3px;
`;
const Handle = styled.div`
  position: absolute; left: 493px; top: -7px; width: 36px; height: 13px; background: #17181a; border: 1px solid #555;
  display: flex; flex-direction: column; gap: 2px; padding: 4px 5px 0;
  i { height: 1px; flex: none; background: #888; }
`;
const TitleRow = styled.div`height: 38px; flex: none; display: flex; align-items: center; padding: 0 0 2px 2px;`;
const Grip = styled.div`width: 2px; height: 20px; margin: 0 11px 0 10px; background: repeating-linear-gradient(#aaa 0 2px, transparent 2px 4px);`;
const Menu = styled.div`display: flex; gap: 20px; width: 324px; margin-top: -3px;`;
const Title = styled.div`width: 436px; margin-top: -7px; white-space: pre; letter-spacing: .25px; font-family: "Liberation Mono", ${UI}; font-size: 12px; b { font: 10.500px "Liberation Mono"; letter-spacing: 0; }`;
const PinBtn = styled.div`width: 72px; height: 25px; background: #a3a3a3; text-align: center; line-height: 22px; margin: -1px 12px 0 0;`;
const WinBtns = styled.svg`display: block; overflow: visible;`;
const WinBody = styled.div`flex: 1; display: flex; gap: 5px; min-height: 0;`;
const Side = styled.div`
  width: 119px; flex: none; border: 1px solid #999; box-shadow: inset 1px 1px #fff; padding-top: 14px; display: flex; flex-direction: column; overflow: hidden;
`;
const SideItem = styled.div`height: 55px; flex: none; padding-left: 26px; display: flex; flex-direction: column; align-items: center; gap: 0; span { line-height: 14px; }`;
const HScroll = styled.div`width: 88px; height: 5px; border-radius: 3px; background: #cdcdcd; margin: -5px 0 0 4px; flex: none;`;
const Canvas = styled.div`
  flex: 1; position: relative; border: 1px solid #ddd; border-top: 2px solid #696969; border-left: 2px solid #696969; background: #ebf7f3; overflow: hidden;
`;
const GridSvg = styled.svg`position: absolute; left: 0; top: 0;`;
const Version = styled.div`position: absolute; right: 2px; top: 0; color: #1a2a86; font: 10px/13px "Liberation Mono", monospace; -webkit-text-stroke: .2px #1a2a86;`;
const Node = styled.div`
  position: absolute; left: ${p => p.$x}px; top: ${p => p.$y}px; width: ${p => p.$w}px; height: ${p => p.$h}px;
  border: 3px solid #a3a5a6; background: linear-gradient(150deg, #fdfdff, #e0e9f9 50%, #c6d8f6); box-shadow: 1px 1px 0 0 #8b98a8;
  display: flex; justify-content: space-between; font-size: 17px; letter-spacing: .9px; line-height: 24px;
`;
const Band = styled.div`
  width: 35px; background: linear-gradient(#d3e0f9, #89aaec); writing-mode: vertical-rl; font: 900 22px/35px ${UI}; letter-spacing: .2px;
  display: flex; justify-content: center; padding-bottom: 3px;
`;
const PortCol = styled.div`
  width: ${p => p.$w}px; display: flex; flex-direction: column; justify-content: ${p => p.$j || "space-between"};
  padding: ${p => p.$p}; text-align: ${p => p.$a || "left"};
`;
const PortSvg = styled.svg`position: absolute; left: ${p => p.$x}px; top: ${p => p.$y}px; overflow: visible;`;
const Port = ({ x, y, f = "#d8e4f8" }) => <PortSvg $x={x} $y={y} width="7" height="18"><path d="M0 0l5 4v10l-5 4" fill={f} stroke="#a3a5a6" strokeWidth="2.500" /></PortSvg>;
const Board = styled.div`
  position: absolute; left: 647px; top: 182px; width: 212px; height: 82px; border: 3px solid #a3a5a6; background: #f9faff; box-shadow: 1px 1px #8b98a8;
  display: flex; justify-content: flex-end;
`;
const BoardScroll = styled.div`
  width: 21px; border-left: 2px solid #a3a5a6; display: grid; grid-template-rows: 18px 1fr 20px; justify-items: stretch;
  div { display: grid; place-items: center; } div + div { border-top: 2px solid #a3a5a6; }
`;
const BoardTab = styled.div`position: absolute; left: 649px; top: 166px; width: 70px; height: 17px; font-size: 10.500px; line-height: 17px; span { position: relative; padding-left: 5px; } svg { position: absolute; left: 0; top: 0; }`;

const sideItems = [["star", "常用"], ["struct", "结构模型"], ["dataGrid", "结构模型数据"], ["chart", "后处理"], ["yjk", "YJK模型"], ["sectOpt", "截面优化"], ["sigma", "优化算法"], ["pi", "数学"]];

const Gama = () => (
  <Win>
    <Handle><i /><i /></Handle>
    <TitleRow>
      <Icon name="logo" size={31} /><Grip />
      <Menu><span>文件</span><span>编辑</span><span>分布式计算</span><span>帮助</span></Menu>
      <Title>盈建科数字化智能设计软件<b> Y-GAMA - </b>新文件<b>*</b></Title>
      <PinBtn>取消置顶</PinBtn>
      <WinBtns width="114" height="32">
        <defs>
          <linearGradient id="gUp" x2="0" y2="1"><stop offset="0" stopColor="#c8eefa" /><stop offset="1" stopColor="#1684cc" /></linearGradient>
          <linearGradient id="gDown" x2="0" y2="1"><stop offset="0" stopColor="#1684cc" /><stop offset="1" stopColor="#c8eefa" /></linearGradient>
        </defs>
        <rect x=".5" y="11.500" width="29" height="9" fill="#d6e5f4" stroke="#5577a0" /><path d="M2 13h26" stroke="#fff" strokeWidth="2" />
        <rect x="42.500" y="3.500" width="29" height="26" fill="#fdfdfd" stroke="#1272b4" /><path d="M43 6h28" stroke="#3c94dc" strokeWidth="4" />
        <path d="M44 10h26v6H44z" fill="#e4e4e4" />
        <path d="M84 7l6-5 8 8 8-8 6 5-8 9 8 9-6 6-8-9-8 9-6-6 8-9z" fill="#d5252d" stroke="#7c1015" /><path d="M87 7l3-3 8 9 8-9 3 3-7 7h-8z" fill="#ee8489" />
      </WinBtns>
    </TitleRow>
    <WinBody>
      <Side>{sideItems.map(([i, t]) => <SideItem key={t}><Icon name={i} size={20} /><span>{t}</span></SideItem>)}<HScroll /></Side>
      <Canvas>
        <GridSvg width="890" height="456">
          <path d="M134 0v456M297 0v456M460 0v456M623 0v456M785.500 0v456M0 70.500h890M0 171h890M0 272h890M0 373h890" stroke="#f1e4e4" strokeWidth="1.500" />
          <path d="M274 223h94M588 223h64" stroke="#8f2aa8" strokeWidth="2" strokeDasharray="16 10" />
        </GridSvg>
        <Version>ver. 2.0.2210.2118</Version>
        <Node $x={30} $y={123} $w={233} $h={199}>
          <PortCol $w={105} $p="33px 0 38px 6px"><span>阻尼器参数</span><span>塔号</span></PortCol>
          <Band>点选YJK消能组件</Band>
          <PortCol $w={87} $j="center" $p="0 2px 3px 0" $a="right"><span>消能组件</span></PortCol>
          <Port x={-4} y={39} f="#ebf7f3" /><Port x={-4} y={136} f="#ebf7f3" /><Port x={228} y={88} />
        </Node>
        <Node $x={367} $y={145} $w={215} $h={157}>
          <PortCol $w={87} $j="center" $p="0 0 3px 6px"><span>消能组件</span></PortCol>
          <Band>分解消能组件</Band>
          <PortCol $w={87} $p="9px 2px 15px 0" $a="right"><span>单元线</span><span>组件截面</span><span>标准层</span></PortCol>
          <Port x={-4} y={66} f="#ebf7f3" /><Port x={210} y={15} /><Port x={210} y={66} /><Port x={210} y={118} />
        </Node>
        <BoardTab><svg width="72" height="17"><path d="M.5 17V.5h54L70 17" fill="#fdfdff" stroke="#a3a5a6" /></svg><span>文字白板</span></BoardTab>
        <Board>
          <BoardScroll><div><Chevron d={UP} c="#a3a5a6" w={2.4} /></div><div /><div><Chevron d={DOWN} c="#a3a5a6" w={2.4} /></div></BoardScroll>
          <Port x={-4} y={28} f="#ebf7f3" /><Port x={207} y={30} f="#f9faff" />
        </Board>
      </Canvas>
    </WinBody>
  </Win>
);

/* ---------- bottom ---------- */
const Splitter = styled.div`height: 9px; flex: none; background: #696969; border-top: 1px solid #ddd;`;
const Bottom = styled.div`flex: 1; display: flex; min-height: 0; overflow: hidden;`;
const DotStrip = styled.div`
  width: 15px; flex: none; background: #a0a0a0; padding: 3px 2px;
  &::before { content: ""; display: block; height: 4px; background: repeating-linear-gradient(90deg, #333 0 1px, transparent 1px 2px); clip-path: polygon(0 0, 100% 0, 100% 25%, 0 25%, 0 75%, 100% 75%, 100% 100%, 0 100%); }
`;
const Command = styled.div`width: 753px; flex: none; background: #fff; display: flex; flex-direction: column;`;
const History = styled.div`height: 54px; flex: none; display: flex; justify-content: space-between; border-bottom: 1px solid #a9a99c; line-height: 17px; padding-left: 4px; letter-spacing: .22px;`;
const VScroll = styled.div`width: 16px; background: #f0f0f0; display: flex; flex-direction: column; align-items: center; padding-top: 5px; gap: 6px; i { width: 16px; height: 17px; background: #cdcdcd; }`;
const Prompt = styled.div`height: 14px; flex: none; display: flex; justify-content: space-between; padding-left: 4px; line-height: 17px;`;
const HBar = styled.div`width: 63px; background: #f0f0f0; display: flex; align-items: center; justify-content: space-between; padding: 1px 3px; i { width: 17px; height: 14px; background: #cdcdcd; margin-right: 17px; }`;
const Tools = styled.div`flex: 1; position: relative; display: flex; flex-direction: column; gap: 5px; padding: 3px 0 0 2px;`;
const ToolRow = styled.div`display: flex; height: 31px;`;
const ToolCell = styled.div`width: 38px; flex: none; display: grid; place-items: center;`;
const TreeLabel = styled.div`font-size: 15px; line-height: 15px; text-align: center; color: ${K}; margin-top: -1px;`;
const WaterMark = styled.div`
  position: absolute; left: 848px; top: 7px; color: rgba(140,140,140,.6); font-size: 15px; line-height: 22px;
  b { display: block; font-weight: 400; font-size: 20px; line-height: 22px; }
  i { font-style: normal; font-family: "Liberation Sans"; }
`;
const row1 = ["cutSun", "cutDot", "cutBack", "cubeTop", "cubeLeft", "cubeFront", "house", "orbit", "hand", "zoomAll", "zoomWin", "teapot", "dist", "distDiag", "angle", "zoomInA", "zoomOutA", "styleA", "wrench", "camera", "fifty", "pdf", "dwg", "tower", "books", "winClose", "lightWin", "bracketA", "list"];
const row2 = ["beam", "wheel", "sheets1", "sheets2", "sheets3", "planeLock", "tree", "acadTower", "acadCube", "photo", "sunBall"];
const CMD = "选择对象:[当前选择方式<点选+框选>(Tab键切换选择方式)]";

export default function App() {
  return (
    <Screen>
      <Global />
      <TabBar>
        {tabs.map(([t, w], i) => <TabCell key={t} $w={w}>{i ? t : <ActiveTab>{t}</ActiveTab>}</TabCell>)}
        {blueTabs.map(([t, w]) => <TabCell key={t} $w={w} $blue>{t}</TabCell>)}
        <TabCell $w={39}><svg width="15" height="17"><rect x=".5" y="2.500" width="14" height="8" rx="3" fill="#eee" stroke="#555" /><path d="M5 5h5l-2.500 3z" /></svg></TabCell>
      </TabBar>
      <Ribbon>
        {groups.map(([w, label, items]) => (
          <Group key={label} $w={w}>
            <GroupBody>
              {items ? items.map(([i, t, tw, c], k) => <Tool key={k} $w={tw}><Icon name={i} size={31} /><span>{t}</span>{c ? <Caret /> : null}</Tool>)
                : <ToolGrid>{g3.map(i => <Icon key={i} name={i} size={30} />)}</ToolGrid>}
            </GroupBody>
            <GroupLabel>{label}</GroupLabel>
          </Group>
        ))}
        <Filler />
        <FloorBox>
          <FloorIcons>{["up", "down", "layers", "frames"].map(i => <Icon key={i} name={i} size={30} />)}</FloorIcons>
          <FloorSelect>第1标准层 (第1自然层)<BlackCaret /></FloorSelect>
        </FloorBox>
      </Ribbon>
      <Main>
        <Model />
        <SidePanel>
          <Dock>
            <Fieldset>
              <Legend>选择</Legend>
              <Cols>
                <RadioCol><Radio t="全部" on /><Radio t="筛选" line /><Radio t="光标" on /><Radio t="围区" /></RadioCol>
                <CheckCol>
                  {checks.map(([h, items], k) => <CheckRow key={k} $h={h}>{items.map(([t, w, on]) => <Check key={t} t={t} w={w} on={on} />)}</CheckRow>)}
                  <CheckRow $h={22}>
                    <Modes>
                      <Mode><svg width="13" height="13"><rect x=".5" y=".5" width="12" height="12" fill="#ccc" stroke="#222" /></svg></Mode>
                      <Mode $on><svg width="16" height="16"><path d="M.5.5h10v4h5v11h-10v-4h-5z" fill="#bbb" stroke="#333" /><path d="M4.500 4.500h7v7h-7z" fill="none" stroke="#777" strokeDasharray="1 1" /></svg></Mode>
                      <Mode><svg width="16" height="16"><path d="M.5.5h10v10h-10z" fill="#ccc" stroke="#555" /><path d="M5.500 4.500h10v11h-10z" fill="#fff" stroke="#111" /></svg></Mode>
                    </Modes>
                    <Check t="工作树常驻" w={80} on />
                  </CheckRow>
                </CheckCol>
              </Cols>
            </Fieldset>
            <FilterRow>方向过滤：<DropBox>全部<Chevron d={DOWN} /></DropBox><PushBtn>上次选择</PushBtn></FilterRow>
            <ListBox />
          </Dock>
          <DockStrip>
            <svg width="12" height="50"><path d="M2 5l8 8M10 5l-8 8M1 27l5-4v8zM5 27h6M2 40h10v9H2zM2 44h9" fill="none" stroke="#111" strokeWidth="1.400" /></svg>
            <VText $mt={440}>（更多功能在右键）</VText>
            <VText $mt={54}>工作树</VText>
          </DockStrip>
        </SidePanel>
      </Main>
      <Splitter />
      <Bottom>
        <DotStrip />
        <Command>
          <History>
            <div>{CMD}<br />指定对角点:<br />{CMD}</div>
            <VScroll><Chevron d={UP} /><i /><Chevron d={DOWN} /></VScroll>
          </History>
          <Prompt>命令:<HBar><svg width="8" height="12"><path d="M6 1.500L1.500 6 6 10.500" fill="none" stroke="#444" strokeWidth="1.600" /></svg><i /><svg width="8" height="12"><path d="M1.500 1.500L6 6l-4.500 4.500" fill="none" stroke="#444" strokeWidth="1.600" /></svg></HBar></Prompt>
        </Command>
        <DotStrip />
        <Tools>
          <ToolRow>{row1.map(i => <ToolCell key={i}><Icon name={i} size={30} /></ToolCell>)}</ToolRow>
          <ToolRow>{row2.map(i => <ToolCell key={i}>{i === "tree" ? <TreeLabel>工作<br />树</TreeLabel> : <Icon name={i} size={30} />}</ToolCell>)}</ToolRow>
          <WaterMark><b>激活 Windows</b>转到<i>“</i>设置<i>”</i>以激活 Windows。</WaterMark>
        </Tools>
      </Bottom>
      <Gama />
    </Screen>
  );
}
